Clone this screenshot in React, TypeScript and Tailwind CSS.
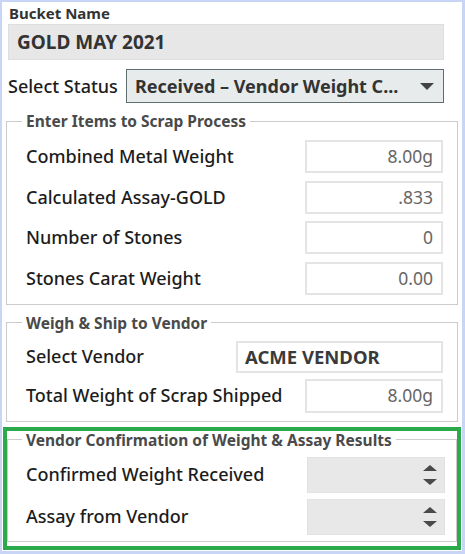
import React from "react";

const font = { fontFamily: '"Noto Sans", "Open Sans", sans-serif' };

function Field({ label, value, valueBold = false, boxClass = "w-[138px]", h = "h-[33px]" }: { label: string; value: string; valueBold?: boolean; boxClass?: string; h?: string }) {
  return (
    <div className={`flex items-center justify-between ${h}`}>
      <span className="text-[18px] font-medium text-[#1c1c1c]">{label}</span>
      <div
        className={`${boxClass} h-full border-2 border-[#e4e4e4] bg-white flex items-center ${
          valueBold ? "justify-start pl-[7px] font-bold text-[#3a3a3a] text-[18.5px]" : "justify-end pr-[8px] text-[#666666] text-[17.5px]"
        }`}
      >
        {value}
      </div>
    </div>
  );
}

function Spinner({ label }: { label: string }) {
  return (
    <div className="flex items-center justify-between h-[36px]">
      <span className="text-[18px] font-medium text-[#1c1c1c]">{label}</span>
      <div className="w-[138px] h-full bg-[#e8e8e8] border border-[#e2e2e2] flex items-center justify-end pr-[6px]">
        <svg width="16" height="22" viewBox="0 0 16 22">
          <polygon points="1,7 15,7 8,1" fill="#4a4a4a" />
          <polygon points="1,15 15,15 8,21" fill="#4a4a4a" />
        </svg>
      </div>
    </div>
  );
}

function Legend({ children, lh = "leading-[20px]" }: { children: React.ReactNode; lh?: string }) {
  return (
    <legend className={`ml-[-4px] px-[4px] text-[15.5px] font-bold text-[#4a4a4a] ${lh}`}>{children}</legend>
  );
}

export default function App() {
  return (
    <div style={font} className="w-[465px] h-[554px] bg-[#c8d5f7] pt-[2px] pl-[2px] pr-[3px] pb-[3px]">
      <div className="w-full h-full bg-white flex flex-col">
        <div className="pl-[6px] pr-[18px] pt-[2px]">
          <div className="text-[15px] font-bold text-[#333333] leading-[19px] pl-[1px]">Bucket Name</div>
          <div className="mt-[1px] h-[36px] bg-[#e7e7e7] border border-[#dedede] flex items-center pl-[8px] text-[19px] font-bold text-[#333333]">
            GOLD MAY 2021
          </div>
          <div className="mt-[9px] flex items-center justify-between h-[34px]">
            <span className="text-[18px] font-medium text-[#1c1c1c]">Select Status</span>
            <div className="w-[318px] h-full bg-[#e8ebeb] border border-[#5f6f6f] flex items-center justify-between pl-[8px] pr-[8px]">
              <span className="text-[18px] font-bold text-[#333333]">Received – Vendor Weight C...</span>
              <svg width="16" height="9" viewBox="0 0 16 9">
                <polygon points="1,1 15,1 8,8" fill="#444444" />
              </svg>
            </div>
          </div>
        </div>

        <div className="pl-[4px] pr-[4px] mt-[8px]">
          <fieldset className="border border-[#cbcbcb] pl-[19px] pr-[14px] pt-[9px] pb-[9px]">
            <Legend>Enter Items to Scrap Process</Legend>
            <div className="flex flex-col gap-[7.5px]">
              <Field label="Combined Metal Weight" value="8.00g" />
              <Field label="Calculated Assay-GOLD" value=".833" />
              <Field label="Number of Stones" value="0" />
              <Field label="Stones Carat Weight" value="0.00" />
            </div>
          </fieldset>

          <fieldset className="mt-[8px] border border-[#cbcbcb] pl-[19px] pr-[14px] pt-[8px] pb-[8px]">
            <Legend>Weigh &amp; Ship to Vendor</Legend>
            <div className="flex flex-col gap-[6px]">
              <Field label="Select Vendor" value="ACME VENDOR" valueBold boxClass="w-[207px]" h="h-[32px]" />
              <Field label="Total Weight of Scrap Shipped" value="8.00g" h="h-[34px]" />
            </div>
          </fieldset>
        </div>

        <div className="mt-[5px] ml-[1px] mr-[1px] border-[4px] border-[#2aaa4a] pb-[4px]">
          <fieldset className="border border-[#cbcbcb] pl-[18px] pr-[11px] pt-[8px] pb-[6px]">
            <Legend lh="leading-[18px]">Vendor Confirmation of Weight &amp; Assay Results</Legend>
            <div className="flex flex-col gap-[6px]">
              <Spinner label="Confirmed Weight Received" />
              <Spinner label="Assay from Vendor" />
            </div>
          </fieldset>
        </div>
      </div>
    </div>
  );
}
